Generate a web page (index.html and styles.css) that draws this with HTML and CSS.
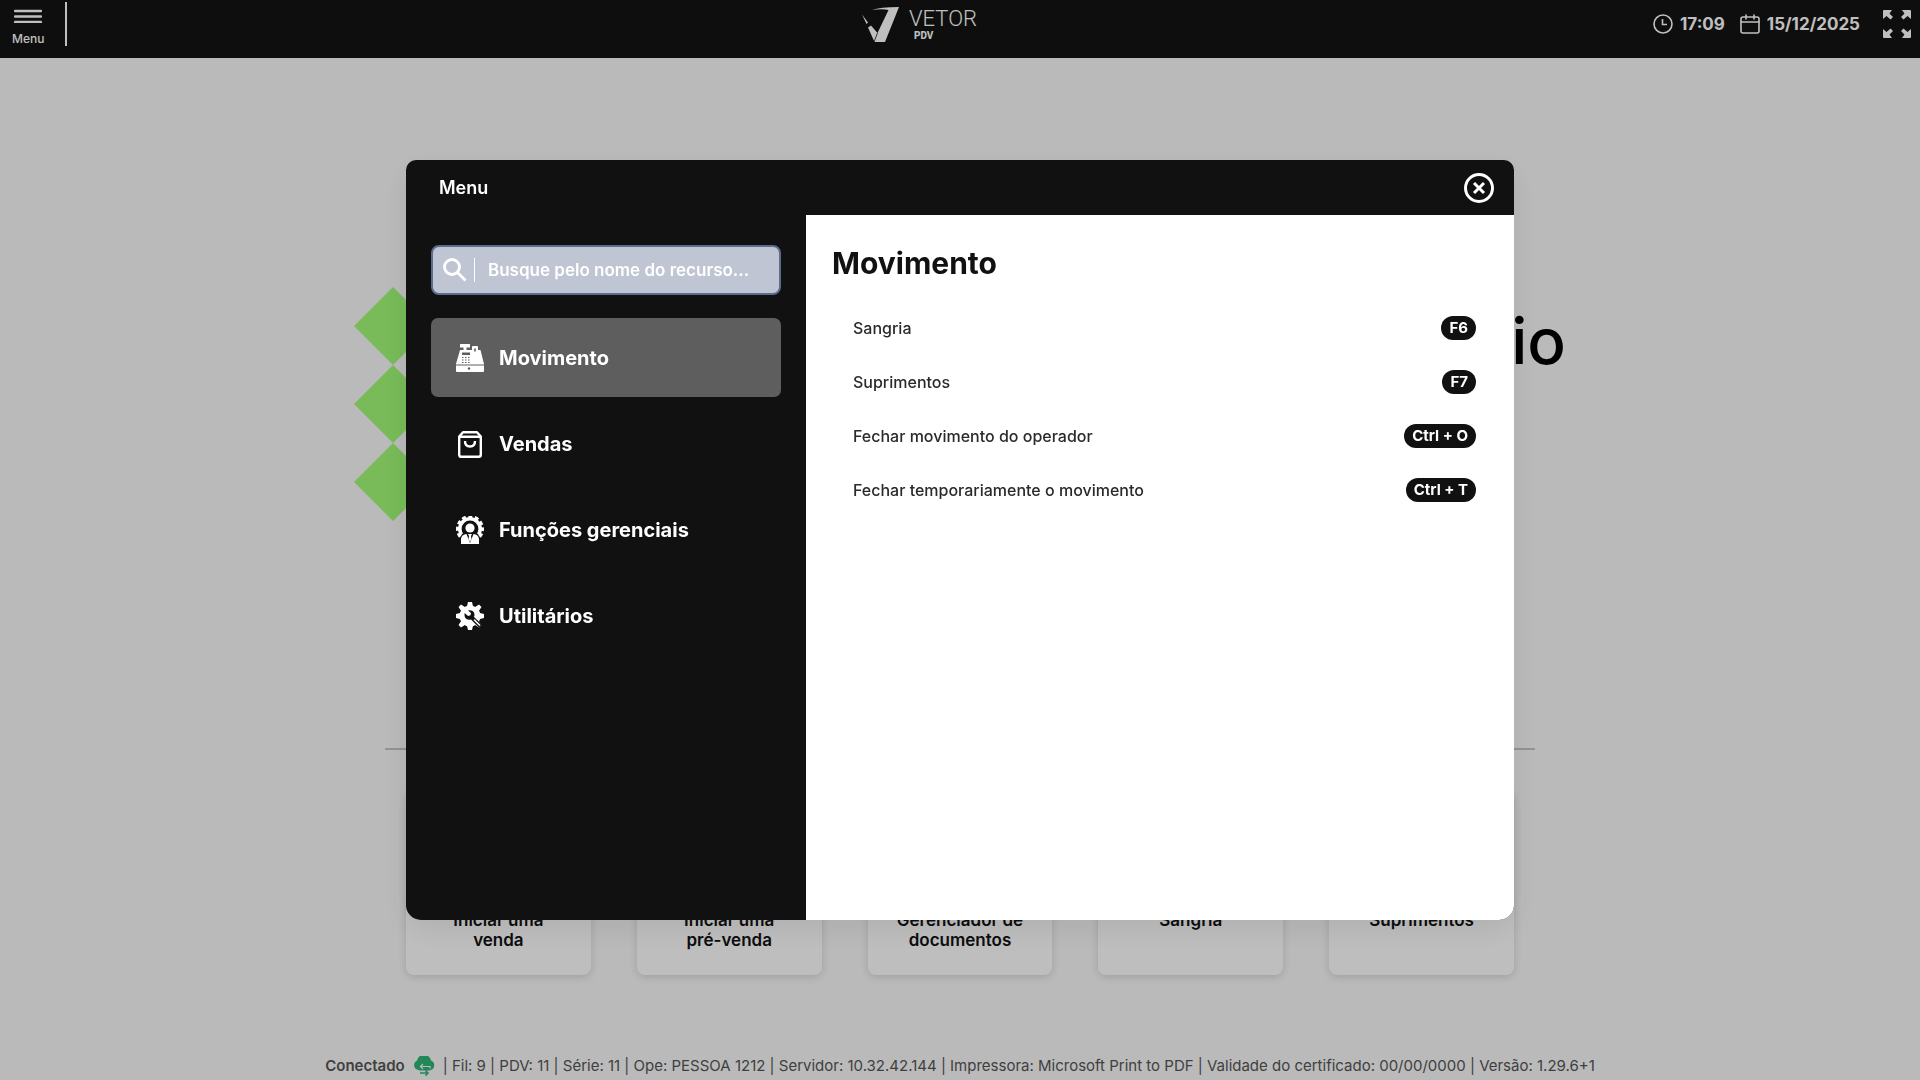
FILE: index.html
```html
<!DOCTYPE html>
<html lang="pt-BR">
  <head>
    <meta charset="UTF-8" />
    <meta name="viewport" content="width=device-width, initial-scale=1.0" />
    <title>Vetor PDV</title>
    <link rel="stylesheet" href="styles.css">
  </head>
  <body>
    <header class="topbar">
      <div class="topbar-left">
        <button type="button" class="menu-button">
          <svg width="28" height="14" viewBox="0 0 28 14" aria-hidden="true">
            <path d="M1 2h26M1 7.5h26M1 13h26" stroke="currentColor" stroke-width="2.4" stroke-linecap="round" />
          </svg>
          Menu
        </button>
        <span class="topbar-divider"></span>
      </div>

      <div class="brand">
        <svg width="37" height="35" viewBox="0 0 37 35" aria-hidden="true">
          <path d="M0 7.500l6 8-1.500 1.500zM10 3Q18 0 37 0L23 35H12.500L6 20.500 9 18.500l6.500 7.500L26.500 3Q20 1.500 10 3z" fill="currentColor" />
          <path d="M15.500 26l-3.500 9" stroke="#131313" stroke-width="0.8" />
        </svg>
        <div class="brand-text">
          <span class="brand-name">VETOR</span>
          <span class="brand-product">PDV</span>
        </div>
      </div>

      <div class="topbar-right">
        <div class="status">
          <svg width="20" height="20" viewBox="0 0 20 20" fill="none" stroke="currentColor" stroke-width="1.6" aria-hidden="true">
            <circle cx="10" cy="10" r="9" />
            <path d="M9.500 5v5.500H14" />
          </svg>
          <span>17:09</span>
        </div>
        <div class="status">
          <svg width="20" height="20" viewBox="0 0 20 20" fill="none" stroke="currentColor" stroke-width="1.6" stroke-linecap="round" aria-hidden="true">
            <rect x="1" y="3" width="18" height="16" rx="2" />
            <path d="M1 8h18M6 1v4M14 1v4" />
          </svg>
          <span>15/12/2025</span>
        </div>
        <button type="button" class="fullscreen-button" aria-label="Tela cheia">
          <svg width="28" height="28" viewBox="0 0 28 28" aria-hidden="true">
            <path d="M1 0h8L6.500 3.500l3.500 3.500-2.500 2.500-4-3.500L0 9V1q0-1 1-1zM27 0q1 0 1 1v8l-3.500-3-4 3.500L18 7l3.500-3.500L19 0zM0 27v-8l3.500 3 4-3.500L10 21l-3.500 3.500L9 28H1q-1 0-1-1zM28 27q0 1-1 1h-8l2.500-3.500L18 21l2.500-2.500 4 3.500 3.500-3z" fill="currentColor" />
          </svg>
        </button>
      </div>
    </header>

    <main class="home">
      <div class="hero">
        <svg class="hero-logo" width="156" height="234" viewBox="0 0 156 234" aria-hidden="true">
          <path d="M39 0l39 39-39 39L0 39zM39 78l39 39-39 39-39-39zM39 156l39 39-39 39-39-39z" fill="currentColor" />
        </svg>
        <h1 class="hero-title">io</h1>
      </div>

      <hr class="separator" />

      <nav class="shortcuts">
        <a href="#" class="shortcut">Iniciar uma venda</a>
        <a href="#" class="shortcut">Iniciar uma<br />pré-venda</a>
        <a href="#" class="shortcut">Gerenciador de documentos</a>
        <a href="#" class="shortcut">Sangria</a>
        <a href="#" class="shortcut">Suprimentos</a>
      </nav>
    </main>

    <footer class="statusbar">
      <span class="connected">Conectado</span>
      <svg width="22" height="20" viewBox="0 0 22 20" aria-hidden="true">
        <path d="M5.500 14A5 5 0 0 1 4 4.500 7.200 7.200 0 0 1 18 4.500a5 5 0 0 1-.5 9.500L16 16H7z" fill="#2fb574" />
        <path d="M17 12.500v-2H8M10 8l-2.500 2.500L10 13" fill="none" stroke="#f9f9f9" stroke-width="1.2" />
        <path d="M5 14.500h12v5H5z" fill="#f9f9f9" />
        <path d="M7 17h8M12.500 14.500L15 17l-2.500 2.500" fill="none" stroke="#2fb574" stroke-width="1.6" />
      </svg>
      <span>| Fil: 9 | PDV: 11 | Série: 11 | Ope: PESSOA 1212 | Servidor: 10.32.42.144 | Impressora: Microsoft Print to PDF | Validade do certificado: 00/00/0000 | Versão: 1.29.6+1</span>
    </footer>

    <!-- Menu modal -->
    <div class="overlay">
      <section class="modal" role="dialog" aria-labelledby="modal-title">
        <div class="modal-header">
          <h2 class="modal-title" id="modal-title">Menu</h2>
          <button type="button" class="close-button" aria-label="Fechar">
            <svg width="30" height="30" viewBox="0 0 30 30" fill="none" stroke="currentColor" stroke-width="3" aria-hidden="true">
              <circle cx="15" cy="15" r="13.500" />
              <path d="M10 10l10 10M20 10L10 20" />
            </svg>
          </button>
        </div>

        <div class="modal-body">
          <div class="sidebar">
            <div class="search">
              <label for="search" class="search-label" aria-label="Buscar recurso">
                <svg width="24" height="24" viewBox="0 0 24 24" fill="none" stroke="currentColor" stroke-width="2.800" aria-hidden="true">
                  <circle cx="9" cy="9" r="7.500" />
                  <path d="M14.500 14.500l8 8" />
                </svg>
              </label>
              <input type="text" id="search" class="search-input" placeholder="Busque pelo nome do recurso..." />
            </div>

            <nav class="sections">
              <button type="button" class="section-button active">
                <svg width="28" height="28" viewBox="0 0 28 28" aria-hidden="true">
                  <path d="M4.500 0h9q.5 0 .5.500V3.500h-3.500V6H16V3q0-1 1-1h4q1 0 1 1v3h2.500L28 20v7q0 1-1 1H1q-1 0-1-1v-7L4 6h3.500V3.500H4V.500Q4 0 4.500 0z" fill="currentColor" />
                  <path d="M0 21h28" stroke="#5e5e5e" />
                  <path d="M6 8.500h8V11H6zM18.200 4.500h1.600v3h-1.600z" fill="#5e5e5e" />
                  <circle cx="13" cy="24.500" r="1.200" fill="#5e5e5e" />
                  <path d="M6 13.500h1.500M9 13.500h1.500M12 13.500h1.500M6 16h1.500M9 16h1.500M12 16h1.500M6 18.500h1.500M9 18.500h1.500M12 18.500h1.500" stroke="#5e5e5e" stroke-width="1.2" />
                </svg>
                Movimento
              </button>
              <button type="button" class="section-button">
                <svg width="28" height="28" viewBox="0 0 28 28" fill="none" stroke="currentColor" stroke-width="2.400" stroke-linejoin="round" aria-hidden="true">
                  <path d="M3.200 6.500L7 2.200h14l3.800 4.300v18.300q0 2-2 2H5.200q-2 0-2-2z" />
                  <path d="M4 6.800h20M9 11q0 5.500 5 5.500t5-5.500" />
                </svg>
                Vendas
              </button>
              <button type="button" class="section-button">
                <svg width="28" height="28" viewBox="0 0 28 28" aria-hidden="true">
                  <circle cx="14" cy="13" r="10.200" fill="none" stroke="currentColor" stroke-width="3.600" />
                  <circle cx="14" cy="13" r="12" fill="none" stroke="currentColor" stroke-width="4" stroke-dasharray="3.800 2.480" stroke-dashoffset="1.900" />
                  <path d="M4 28v-6l2-4 4-2h8l4 2 2 4v6z" fill="#111" />
                  <circle cx="14" cy="12" r="4.600" fill="currentColor" />
                  <path d="M5 28v-5q.5-4.500 5.500-5L14 27l3.500-9q5 .5 5.500 5v5z" fill="currentColor" />
                  <path d="M12 18h4l-1 2 .5 3-1.500 3-1.500-3 .5-3z" fill="currentColor" />
                </svg>
                Funções gerenciais
              </button>
              <button type="button" class="section-button">
                <svg width="28" height="28" viewBox="0 0 28 28" aria-hidden="true">
                  <circle cx="14" cy="14" r="10.500" fill="currentColor" />
                  <path d="M12 0h4l1.200 5h-6.400zM12 28h4l1.200-5h-6.400zM0 12v4l5 1.200v-6.400zM28 12v4l-5 1.200v-6.400zM5 2.500L2.500 5l2.800 4.300 4-4zM23 2.500L25.500 5l-2.800 4.300-4-4zM5 25.500L2.500 23l2.800-4.300 4 4zM23 25.500l2.500-2.500-2.800-4.300-4 4z" fill="currentColor" />
                  <path d="M12 8.500q4-1 6 2 1 2.500 0 4.500l8 7.500-3 3-8-8q-4 1-6-2-1-2-.3-4.500l3.300 3 2.500-.7.500-2.300z" fill="#111" />
                  <path d="M18.500 18l5 5" stroke="currentColor" stroke-width="1.600" stroke-linecap="round" />
                </svg>
                Utilitários
              </button>
            </nav>
          </div>

          <div class="content">
            <h3 class="content-title">Movimento</h3>
            <ul class="actions">
              <li><button type="button" class="action">Sangria <kbd class="key">F6</kbd></button></li>
              <li><button type="button" class="action">Suprimentos <kbd class="key">F7</kbd></button></li>
              <li><button type="button" class="action">Fechar movimento do operador <kbd class="key">Ctrl + O</kbd></button></li>
              <li><button type="button" class="action">Fechar temporariamente o movimento <kbd class="key">Ctrl + T</kbd></button></li>
            </ul>
          </div>
        </div>
      </section>
    </div>
  </body>
</html>
```
FILE: styles.css
```css
* {
  box-sizing: border-box;
}

body,
h1,
h2,
h3,
ul {
  margin: 0;
  padding: 0;
}

body {
  display: flex;
  flex-direction: column;
  min-height: 100vh;
  background-color: #f9f9f9;
  color: #111;
  font-family: Inter, "Liberation Sans", sans-serif;
  font-optical-sizing: none;
}

button {
  padding: 0;
  border: none;
  background: none;
  color: inherit;
  font-family: inherit;
  cursor: pointer;
}

svg {
  display: block;
  flex-shrink: 0;
}

/* Top bar */
.topbar {
  display: grid;
  grid-template-columns: 1fr auto 1fr;
  align-items: center;
  height: 58px;
  padding: 0 9px 10px 12px;
  background-color: #131313;
  color: #fff;
}

.topbar-left,
.topbar-right,
.status {
  display: flex;
  align-items: center;
}

.topbar-left {
  gap: 21px;
}

.menu-button {
  display: flex;
  flex-direction: column;
  align-items: center;
  gap: 8px;
  padding-top: 8px;
  font-size: 12px;
  font-weight: 500;
  line-height: 16px;
}

.topbar-divider {
  width: 2px;
  height: 44px;
  background-color: #fff;
}

.brand {
  display: flex;
  align-items: center;
  gap: 10px;
  padding-right: 84px;
}

.brand-text {
  display: flex;
  flex-direction: column;
  font-family: Roboto, sans-serif;
}

.brand-name {
  font-size: 22px;
  font-weight: 300;
  line-height: 24px;
}

.brand-product {
  padding-left: 5px;
  font-size: 10px;
  font-weight: 800;
  line-height: 10px;
}

.topbar-right {
  justify-content: flex-end;
  gap: 15px;
  font-size: 17px;
  font-weight: 700;
}

.status {
  gap: 7px;
}

.fullscreen-button {
  margin-left: 8px;
}

/* Home screen */
.home {
  flex: 1;
  display: flex;
  flex-direction: column;
  align-items: center;
  padding-top: 229px;
}

.hero {
  display: flex;
  justify-content: space-between;
  width: 90%;
  max-width: 1212px;
}

.hero-logo {
  color: #a0fa76;
}

.hero-title {
  padding-top: 16px;
  color: #000;
  font-size: 64px;
  font-weight: 500;
  line-height: 76px;
}

.separator {
  width: 90%;
  max-width: 1150px;
  height: 2px;
  margin: 227px 0 40px;
  border: none;
  background-color: #c4c4c4;
}

.shortcuts {
  display: grid;
  grid-template-columns: repeat(5, 1fr);
  gap: 46px;
  width: 90%;
  max-width: 1108px;
}

.shortcut {
  display: flex;
  justify-content: center;
  height: 185px;
  padding: 120px 25px 0;
  border-radius: 8px;
  background-color: #fefefe;
  box-shadow: 0 2px 10px rgba(0, 0, 0, 0.15);
  color: #111;
  font-size: 17px;
  font-weight: 600;
  line-height: 20px;
  text-align: center;
  text-decoration: none;
}

/* Status bar */
.statusbar {
  display: flex;
  align-items: center;
  justify-content: center;
  gap: 8px;
  padding-bottom: 4px;
  color: #555;
  font-size: 15px;
  line-height: 20px;
}

.connected {
  font-weight: 600;
}

/* Menu modal */
.overlay {
  position: fixed;
  inset: 0;
  display: flex;
  align-items: center;
  justify-content: center;
  background-color: rgba(0, 0, 0, 0.25);
}

.modal {
  display: flex;
  flex-direction: column;
  width: 90%;
  max-width: 1108px;
  height: calc(100vh - 320px);
  overflow: hidden;
  border-radius: 10px 10px 15px 15px;
  background-color: #111;
  box-shadow: 0 10px 30px rgba(0, 0, 0, 0.08);
  color: #fff;
}

.modal-header {
  display: flex;
  align-items: center;
  justify-content: space-between;
  height: 55px;
  padding: 0 20px 0 33px;
}

.modal-title {
  font-size: 18px;
  font-weight: 600;
}

.modal-body {
  flex: 1;
  display: flex;
}

.sidebar {
  width: 400px;
  padding: 30px 25px;
}

.search {
  display: flex;
  align-items: center;
  height: 50px;
  margin-bottom: 23px;
  padding-left: 10px;
  border: 2px solid #5b6c8d;
  border-radius: 8px;
  background-color: #bfc5d2;
}

.search-label {
  padding-right: 7px;
  border-right: 1px solid #fff;
}

.search-input {
  flex: 1;
  min-width: 0;
  padding: 0 13px;
  border: none;
  outline: none;
  background: none;
  color: #fff;
  font-family: inherit;
  font-size: 17px;
  font-weight: 600;
}

.search-input::placeholder {
  color: #fff;
  opacity: 1;
}

.sections {
  display: flex;
  flex-direction: column;
  gap: 7px;
}

.section-button {
  display: flex;
  align-items: center;
  gap: 15px;
  height: 79px;
  padding: 0 25px;
  border-radius: 7px;
  font-size: 20px;
  font-weight: 700;
}

.section-button.active {
  background-color: #5e5e5e;
}

.content {
  flex: 1;
  padding: 30px 38px 30px 26px;
  background-color: #fff;
  color: #111;
}

.content-title {
  margin-bottom: 20px;
  font-size: 30px;
  font-weight: 700;
  line-height: 36px;
}

.actions {
  list-style: none;
}

.action {
  display: flex;
  align-items: center;
  justify-content: space-between;
  width: 100%;
  height: 54px;
  padding-left: 21px;
  color: #2a2a2a;
  font-size: 16px;
  font-weight: 500;
}

.key {
  padding: 0 8px;
  border-radius: 12px;
  background-color: #111;
  color: #fff;
  font-family: inherit;
  font-size: 15px;
  font-weight: 700;
  line-height: 24px;
}
```
